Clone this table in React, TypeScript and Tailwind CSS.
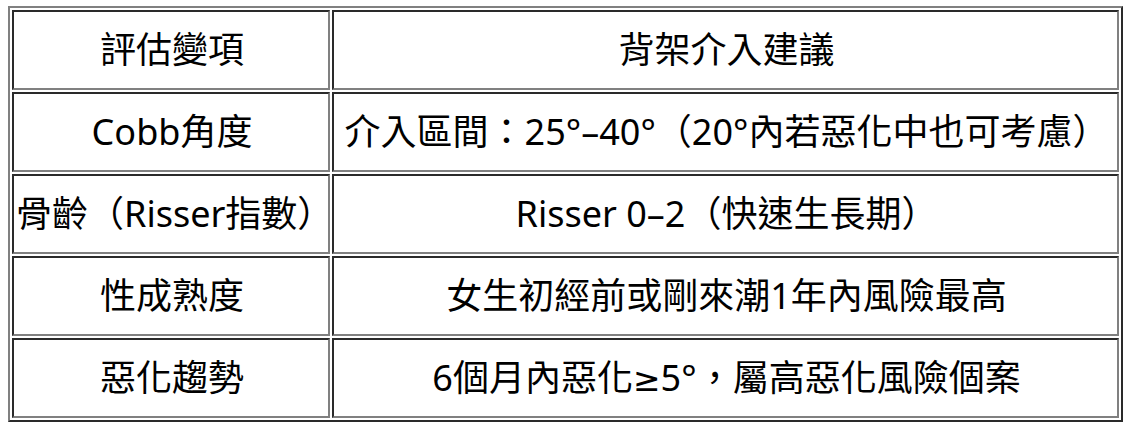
import React from "react";

const Ge = () => <span className="font-['DejaVu_Sans',sans-serif] text-[33px]">≥</span>;

const punctClass: Record<string, string> = {
  "（": "text-right",
  "）": "text-left",
  "：": "text-center",
  "，": "text-left",
};

function fw(s: string): React.ReactNode {
  const out: React.ReactNode[] = [];
  let buf = "";
  let k = 0;
  for (const ch of s) {
    if (punctClass[ch]) {
      if (buf) out.push(buf);
      buf = "";
      out.push(
        <span key={k++} className={`inline-block w-[36px] ${punctClass[ch]}`}>
          {ch}
        </span>
      );
    } else if (ch === "≥") {
      if (buf) out.push(buf);
      buf = "";
      out.push(<Ge key={k++} />);
    } else {
      buf += ch;
    }
  }
  if (buf) out.push(buf);
  return <>{out}</>;
}

const rows: [string, string][] = [
  ["評估變項", "背架介入建議"],
  ["Cobb角度", "介入區間：25°–40°（20°內若惡化中也可考慮）"],
  ["骨齡（Risser指數）", "Risser 0–2（快速生長期）"],
  ["性成熟度", "女生初經前或剛來潮1年內風險最高"],
  ["惡化趨勢", "6個月內惡化≥5°，屬高惡化風險個案"],
];

const cell =
  "h-[80px] pl-[2px] pr-0 py-0 text-center align-middle whitespace-nowrap text-[36px] leading-normal border-2 border-t-[#2a2a2a] border-l-[#2a2a2a] border-b-[#808080] border-r-[#808080]";

export default function App() {
  return (
    <div
      lang="zh-Hant"
      className="bg-white w-[1132px] h-[430px] pt-[6px] pl-[8px] font-['Noto_Sans','Noto_Sans_CJK_TC',sans-serif] text-black"
    >
      <table className="table-fixed w-[1115px] border-separate border-spacing-[2px] border-2 border-t-[#808080] border-l-[#808080] border-r-[#2a2a2a] border-b-[#2a2a2a]">
        <tbody>
          {rows.map(([a, b], i) => (
            <tr key={i}>
              <td className={`${i === 0 ? "w-[318px]" : ""} ${cell}`}>{fw(a)}</td>
              <td className={cell}>{fw(b)}</td>
            </tr>
          ))}
        </tbody>
      </table>
    </div>
  );
}
